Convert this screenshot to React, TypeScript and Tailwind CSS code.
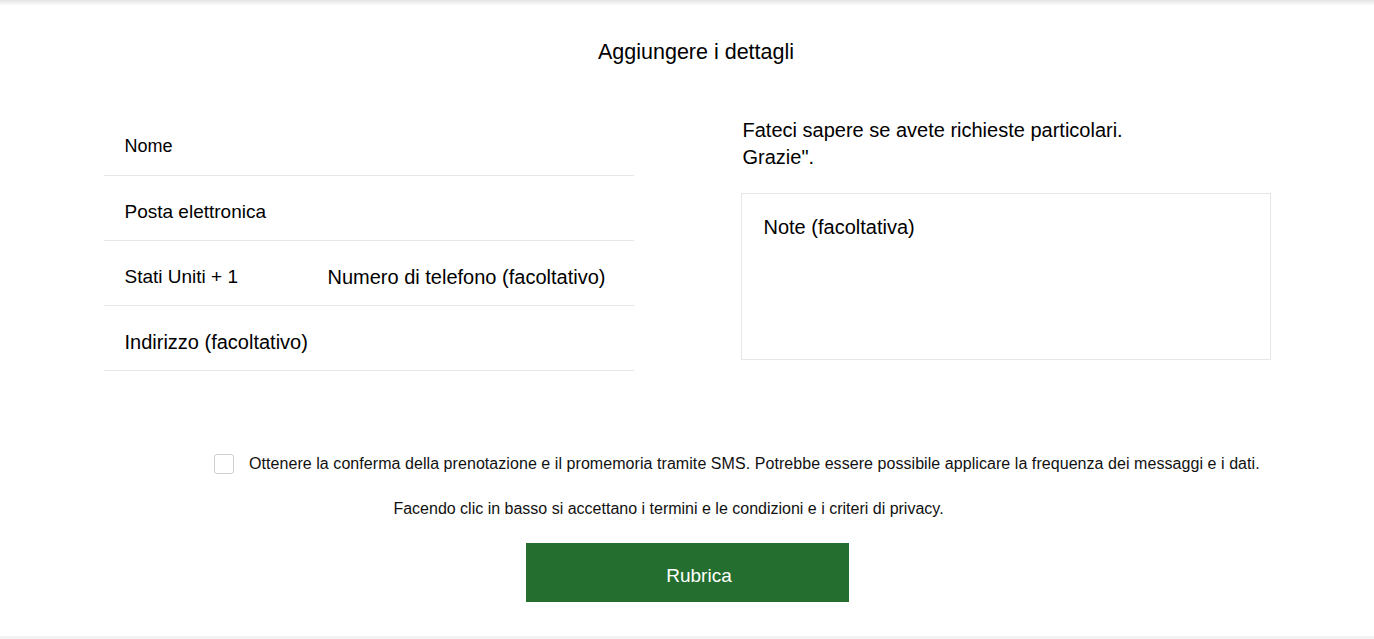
import { useState } from "react";

const font = { fontFamily: '"Liberation Sans", Arial, sans-serif' };

function Row({ children, size }: { children: React.ReactNode; size: string }) {
  return (
    <div className="flex h-[65px] items-center border-b border-[#e6e6e6] pl-[21px] pt-[7px]">
      <span className={`${size} text-black`}>{children}</span>
    </div>
  );
}

export default function App() {
  const [sms, setSms] = useState(false);

  return (
    <div className="flex h-[639px] flex-col bg-white" style={font}>
      <div className="h-[6px] bg-gradient-to-b from-[#e4e4e4] to-white" />
      <h1 className="mt-[30px] pl-[18px] text-center text-[21.5px] text-black">Aggiungere i dettagli</h1>

      <div className="mt-[43px] flex justify-center gap-[107px]">
        <div className="w-[530px]">
          <Row size="text-[18px]">Nome</Row>
          <Row size="text-[19px]">Posta elettronica</Row>
          <div className="flex h-[65px] items-center border-b border-[#e6e6e6] pl-[21px] pt-[7px] text-[20px] text-black">
            <span className="w-[203px] text-[19px]">Stati Uniti + 1</span>
            <span>Numero di telefono (facoltativo)</span>
          </div>
          <Row size="text-[20px]">Indirizzo (facoltativo)</Row>
        </div>

        <div className="w-[530px]">
          <p className="pl-[2px] pt-[6px] text-[20px] leading-[27px] text-black">
            Fateci sapere se avete richieste particolari.
            <br />
            Grazie".
          </p>
          <div className="mt-[22px] h-[167px] border border-[#e6e6e6] px-[22px] pt-[18px] text-[20px] text-black">
            Note (facoltativa)
          </div>
        </div>
      </div>

      <label className="mt-[81px] flex items-center pl-[214px] text-[16px] text-[#111]">
        <button
          type="button"
          onClick={() => setSms(!sms)}
          className={`mr-[15px] h-[20px] w-[20px] rounded-[3px] border border-[#cfcfcf] ${sms ? "bg-[#246f2f]" : "bg-white"}`}
        />
        <span className="tracking-[0.06px]">
          Ottenere la conferma della prenotazione e il promemoria tramite SMS. Potrebbe essere possibile applicare la frequenza dei messaggi e i dati.
        </span>
      </label>

      <p className="mt-[21px] pr-[37px] text-center text-[16px] text-[#111]">
        Facendo clic in basso si accettano i termini e le condizioni e i criteri di privacy.
      </p>

      <div className="mt-[22px] flex justify-center">
        <button type="button" className="h-[59px] w-[323px] bg-[#246f2f] pl-[24px] pt-[7px] text-[19px] text-white">
          Rubrica
        </button>
      </div>

      <div className="mt-auto h-[3px] bg-[#f3f3f3]" />
    </div>
  );
}
